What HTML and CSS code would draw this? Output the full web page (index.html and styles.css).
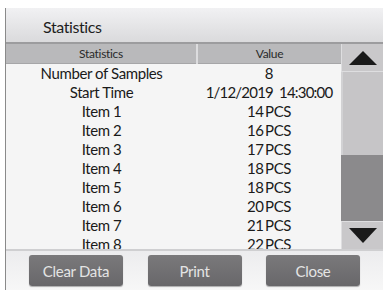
FILE: index.html
```html
<!DOCTYPE html>
<html lang="en">
<head>
    <meta charset="UTF-8">
    <meta name="viewport" content="width=device-width, initial-scale=1.0">
    <title>Statistics</title>
    <link rel="stylesheet" href="styles.css">
</head>
<body>
    <div class="panel">
        <div class="title-bar">Statistics</div>

        <div class="main">
            <div class="table-wrap">
                <table class="stats">
                    <thead>
                        <tr>
                            <th class="col-name">Statistics</th>
                            <th class="col-value">Value</th>
                        </tr>
                    </thead>
                    <tbody>
                        <tr><td>Number of Samples</td><td class="val">8</td></tr>
                        <tr><td>Start Time</td><td class="val date">1/12/2019&nbsp; 14:30:00</td></tr>
                        <tr><td>Item 1</td><td class="val">14 PCS</td></tr>
                        <tr><td>Item 2</td><td class="val">16 PCS</td></tr>
                        <tr><td>Item 3</td><td class="val">17 PCS</td></tr>
                        <tr><td>Item 4</td><td class="val">18 PCS</td></tr>
                        <tr><td>Item 5</td><td class="val">18 PCS</td></tr>
                        <tr><td>Item 6</td><td class="val">20 PCS</td></tr>
                        <tr><td>Item 7</td><td class="val">21 PCS</td></tr>
                        <tr><td>Item 8</td><td class="val">22 PCS</td></tr>
                    </tbody>
                </table>
            </div>

            <div class="scrollbar">
                <button class="arrow-btn">
                    <svg width="28" height="14" viewBox="0 0 28 14"><polygon points="14,0 28,14 0,14" fill="#1a1a1a"/></svg>
                </button>
                <div class="track"></div>
                <div class="thumb"></div>
                <button class="arrow-btn down">
                    <svg width="28" height="15" viewBox="0 0 28 15"><polygon points="0,0 28,0 14,15" fill="#1a1a1a"/></svg>
                </button>
            </div>
        </div>

        <div class="button-bar">
            <button class="action-btn">Clear Data</button>
            <button class="action-btn">Print</button>
            <button class="action-btn">Close</button>
        </div>
    </div>
</body>
</html>
```

FILE: styles.css
```css
* {
    margin: 0;
    padding: 0;
    box-sizing: border-box;
    font-family: Lato, "Open Sans", sans-serif;
}

body {
    background: #ffffff;
    width: 389px;
    height: 299px;
}

.panel {
    margin: 8px 0 0 5px;
    width: 378px;
    height: 282px;
    border-left: 1px solid #8a8a8a;
    display: flex;
    flex-direction: column;
    background: #f4f4f4;
}

.title-bar {
    height: 34px;
    line-height: 37px;
    padding-left: 37px;
    font-size: 16px;
    letter-spacing: -0.4px;
    color: #1e1e1e;
    background: linear-gradient(#f1f1f3, #dadadc);
}

.main {
    display: flex;
    height: 207px;
    border-top: 2px solid #9c9c9e;
    overflow: hidden;
}

.table-wrap {
    flex: 1;
    overflow: hidden;
    background: #f5f5f5;
}

.stats {
    width: 100%;
    border-collapse: collapse;
    table-layout: fixed;
}

.stats th {
    height: 19px;
    font-weight: normal;
    font-size: 12px;
    letter-spacing: -0.3px;
    color: #2a2a2a;
    background: #b9b9bb;
    border-bottom: 1px solid #a6a6a8;
}

.stats .col-name {
    width: 191px;
    border-right: 2px solid #dcdcde;
}

.stats td {
    height: 19px;
    text-align: center;
    font-size: 15px;
    letter-spacing: -0.4px;
    color: #1a1a1a;
    line-height: 19px;
}

.stats td.val {
    word-spacing: -2px;
}

.stats td.date {
    letter-spacing: -0.8px;
    word-spacing: 0;
}

.scrollbar {
    width: 42px;
    display: flex;
    flex-direction: column;
    background: #c6c5c7;
}

.arrow-btn {
    height: 28px;
    border: none;
    border-left: 1px solid #dedee0;
    border-bottom: 1px solid #dedee0;
    background: #c9c8ca;
    display: flex;
    align-items: center;
    justify-content: center;
}

.arrow-btn.down {
    flex: 1;
    border-bottom: none;
    border-top: 1px solid #dedee0;
}

.track {
    height: 83px;
    background: #c6c5c7;
    border-left: 2px solid #d2d2d4;
}

.thumb {
    height: 66px;
    background: #8b8a8c;
}

.button-bar {
    flex: 1;
    display: flex;
    align-items: center;
    justify-content: space-between;
    padding: 0 23px 0 23px;
    border-top: 2px solid #cfcfd1;
    background: linear-gradient(#ececee, #f7f7f7);
}

.action-btn {
    width: 94px;
    height: 31px;
    border: none;
    border-radius: 3px;
    background: linear-gradient(#7a797b, #68676a);
    box-shadow: 0 1px 1px rgba(0, 0, 0, 0.3);
    color: #e4e4e4;
    font-size: 15px;
    letter-spacing: -0.3px;
}
```
